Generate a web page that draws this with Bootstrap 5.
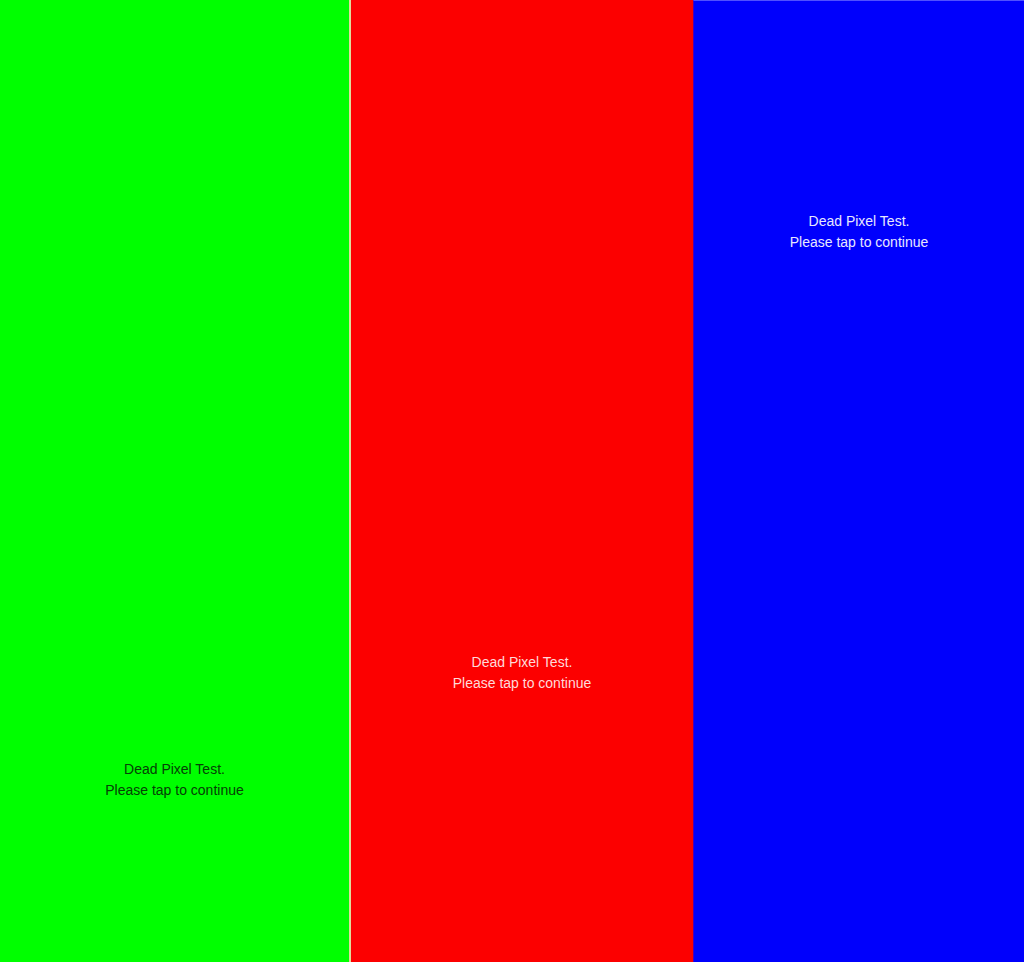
<!DOCTYPE html>
<html lang="en">
<head>
<meta charset="utf-8">
<meta name="viewport" content="width=device-width, initial-scale=1">
<title>Dead Pixel Test</title>
<link href="https://cdn.jsdelivr.net/npm/bootstrap@5.3.0/dist/css/bootstrap.min.css" rel="stylesheet">
<style>
body{font-family:"Liberation Sans",sans-serif;font-size:14px;line-height:21px}
.screens{display:grid;grid-template-columns:351fr 342fr 331fr}
.screen{display:grid;justify-items:center}
.screen p{grid-row:2}
.green{background:#00ff00;color:#064006;grid-template-rows:759fr 42px 161fr;border-right:2px solid #e0dc9c}
.red{background:#fc0000;color:#ffdada;grid-template-rows:652fr 42px 268fr}
.blue{background:#0000fc;color:#e8e8ff;grid-template-rows:210fr 42px 709fr;border-top:1px solid #5050ff;border-left:1px solid #5000b0}
</style>
</head>
<body>
<main class="screens min-vh-100 text-center">
<section class="screen green"><p class="m-0">Dead Pixel Test.<br>Please tap to continue</p></section>
<section class="screen red"><p class="m-0">Dead Pixel Test.<br>Please tap to continue</p></section>
<section class="screen blue"><p class="m-0">Dead Pixel Test.<br>Please tap to continue</p></section>
</main>
<script src="https://cdn.jsdelivr.net/npm/bootstrap@5.3.0/dist/js/bootstrap.bundle.min.js"></script>
</body>
</html>
